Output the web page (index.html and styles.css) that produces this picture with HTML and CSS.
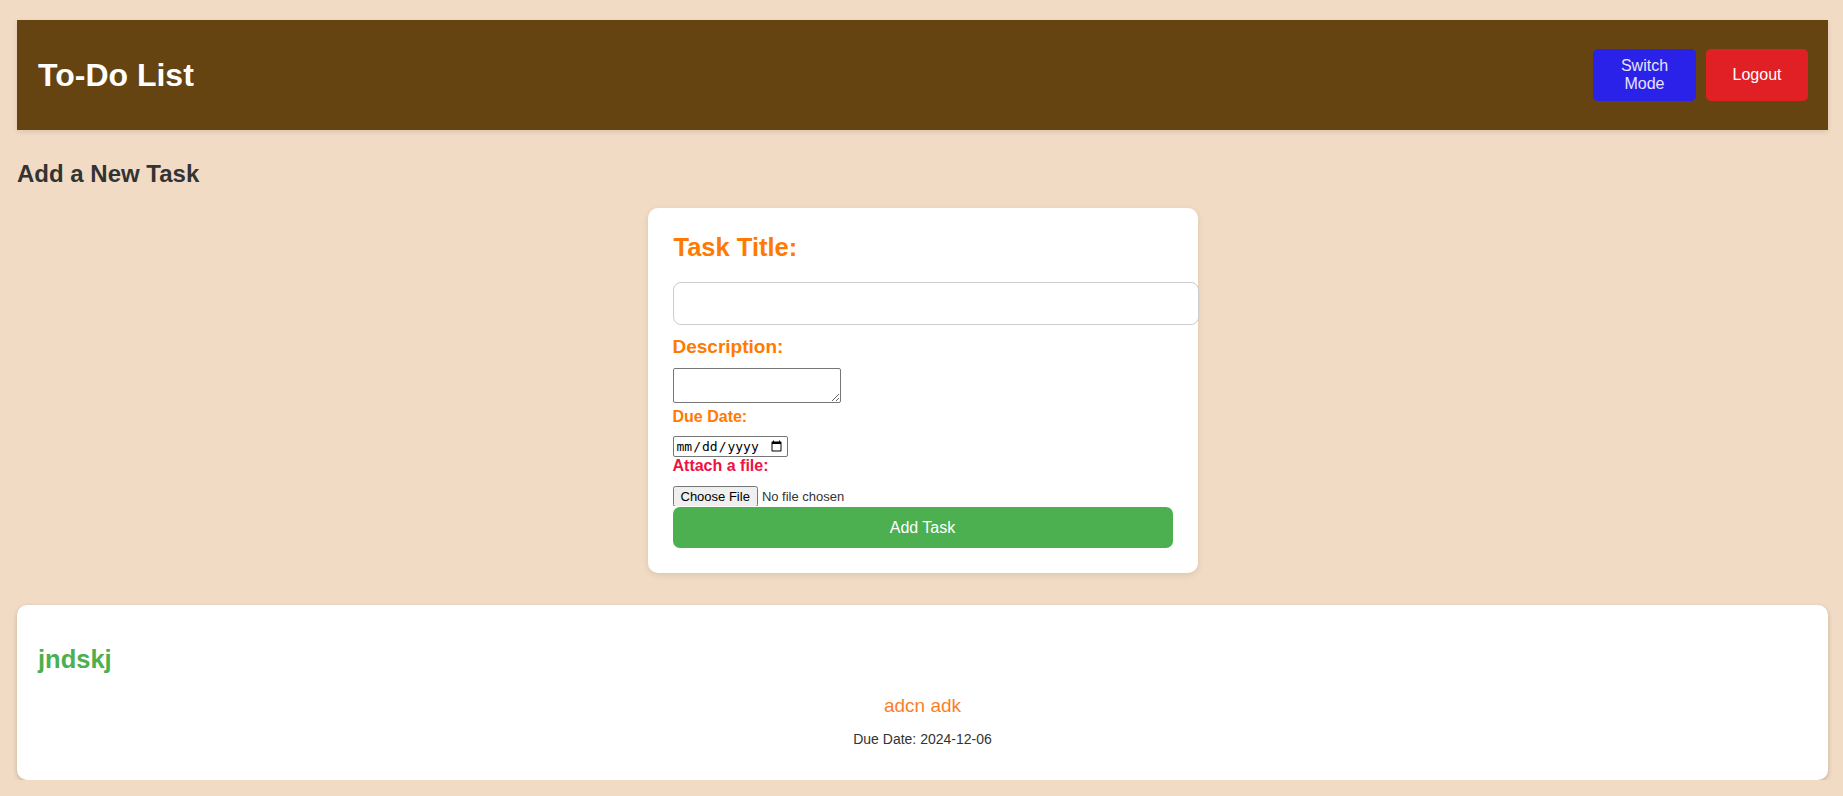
FILE: index.html
```html
<!DOCTYPE html>
<html lang="en-GB">
<head>
<meta charset="UTF-8">
<title>To-Do List</title>
<link rel="stylesheet" href="styles.css">
</head>
<body>
  <header class="topbar">
    <h1 class="app-title">To-Do List</h1>
    <div class="actions">
      <button class="btn btn-switch">Switch Mode</button>
      <button class="btn btn-logout">Logout</button>
    </div>
  </header>

  <h2 class="section-title">Add a New Task</h2>

  <form class="task-form">
    <label class="lbl-title" for="title">Task Title:</label>
    <input class="title-input" type="text" id="title">
    <label class="lbl-desc" for="desc">Description:</label>
    <textarea class="desc-input" id="desc"></textarea>
    <label class="lbl-small" for="due">Due Date:</label>
    <input class="date-input" type="date" id="due">
    <label class="lbl-small lbl-file" for="file">Attach a file:</label>
    <input class="file-input" type="file" id="file">
    <button type="button" class="add-btn">Add Task</button>
  </form>

  <div class="task-card">
    <h2 class="task-name">jndskj</h2>
    <p class="task-desc">adcn adk</p>
    <p class="task-due">Due Date: 2024-12-06</p>
  </div>
</body>
</html>
```
FILE: styles.css
```css
html, body {
  margin: 0;
}
body {
  background: #f2dbc4;
  font-family: "Liberation Sans", Arial, sans-serif;
  padding: 20px 15px 0 17px;
  color: #333;
}
.topbar {
  background: #654412;
  display: flex;
  align-items: center;
  justify-content: space-between;
  height: 110px;
  box-sizing: border-box;
  padding: 0 20px 0 21px;
  box-shadow: 0 2px 5px rgba(0, 0, 0, 0.1);
}
.app-title {
  margin: 0;
  color: #fff;
  font-size: 32px;
  font-weight: bold;
}
.actions {
  display: flex;
  gap: 10px;
}
.btn {
  border: none;
  border-radius: 5px;
  color: #fff;
  font-family: "Liberation Sans", Arial, sans-serif;
  font-size: 16px;
  height: 52px;
  padding: 0 20px;
  line-height: 18px;
  cursor: pointer;
}
.btn-switch {
  background: #2a22e8;
  width: 103px;
  color: #e8e4ff;
}
.btn-logout {
  background: #e02024;
  width: 102px;
}
.section-title {
  margin: 30px 0 20px;
  font-size: 24px;
  line-height: 28px;
  color: #333;
}
.task-form {
  width: 550px;
  box-sizing: border-box;
  margin: 0 auto;
  background: #fff;
  border-radius: 10px;
  padding: 25px;
  box-shadow: 0 2px 6px rgba(0, 0, 0, 0.1);
  display: flex;
  flex-direction: column;
  align-items: flex-start;
}
.lbl-title {
  font-size: 25.5px;
  font-weight: bold;
  color: #ff7a00;
  line-height: 29px;
  margin: 0 0 20px 1px;
}
.title-input {
  height: 43px;
  box-sizing: border-box;
  width: 526px;
  border: 1px solid #ccc;
  border-radius: 8px;
  padding: 11px;
  font-size: 16px;
  margin: 0 -26px 0 0;
}
.lbl-desc {
  font-size: 19px;
  font-weight: bold;
  color: #ff7a00;
  line-height: 22px;
  margin: 11px 0 10px;
}
.desc-input {
  width: 168px;
  height: 35px;
  box-sizing: border-box;
  border: 1px solid #767676;
  border-radius: 2px;
  margin: 0 0 5px;
  display: block;
}
.lbl-small {
  font-size: 16px;
  font-weight: bold;
  color: #ff7a00;
  line-height: 18px;
  margin: 0 0 10px;
}
.lbl-file {
  color: #ee1144;
  margin-bottom: 11px;
}
.date-input {
  width: 115px;
  height: 21px;
  box-sizing: border-box;
  border: 1px solid #767676;
  border-radius: 2px;
  padding: 0 2px;
  font-size: 13px;
  font-family: "DejaVu Sans Mono", monospace;
  margin: 0;
}
.file-input {
  font-size: 13px;
  font-family: "Liberation Sans", Arial, sans-serif;
  height: 20px;
  margin: 0;
}
.add-btn {
  width: 100%;
  height: 41px;
  margin-top: 1px;
  background: #4caf50;
  color: #fff;
  border: none;
  border-radius: 7px;
  font-size: 16px;
  font-family: "Liberation Sans", Arial, sans-serif;
  cursor: pointer;
}
.task-card {
  margin-top: 32px;
  background: #fff;
  border-radius: 10px;
  padding: 20px 20px 20px;
  box-shadow: 0 2px 5px rgba(0, 0, 0, 0.2);
  text-align: center;
}
.task-name {
  text-align: left;
  margin: 20px 0 21px 1px;
  font-size: 25.5px;
  line-height: 29px;
  color: #4caf50;
}
.task-desc {
  margin: 0;
  font-size: 19px;
  line-height: 22px;
  color: #fb7e2a;
}
.task-due {
  margin: 14px 0 13px;
  font-size: 14px;
  line-height: 16px;
  color: #333;
}
```
